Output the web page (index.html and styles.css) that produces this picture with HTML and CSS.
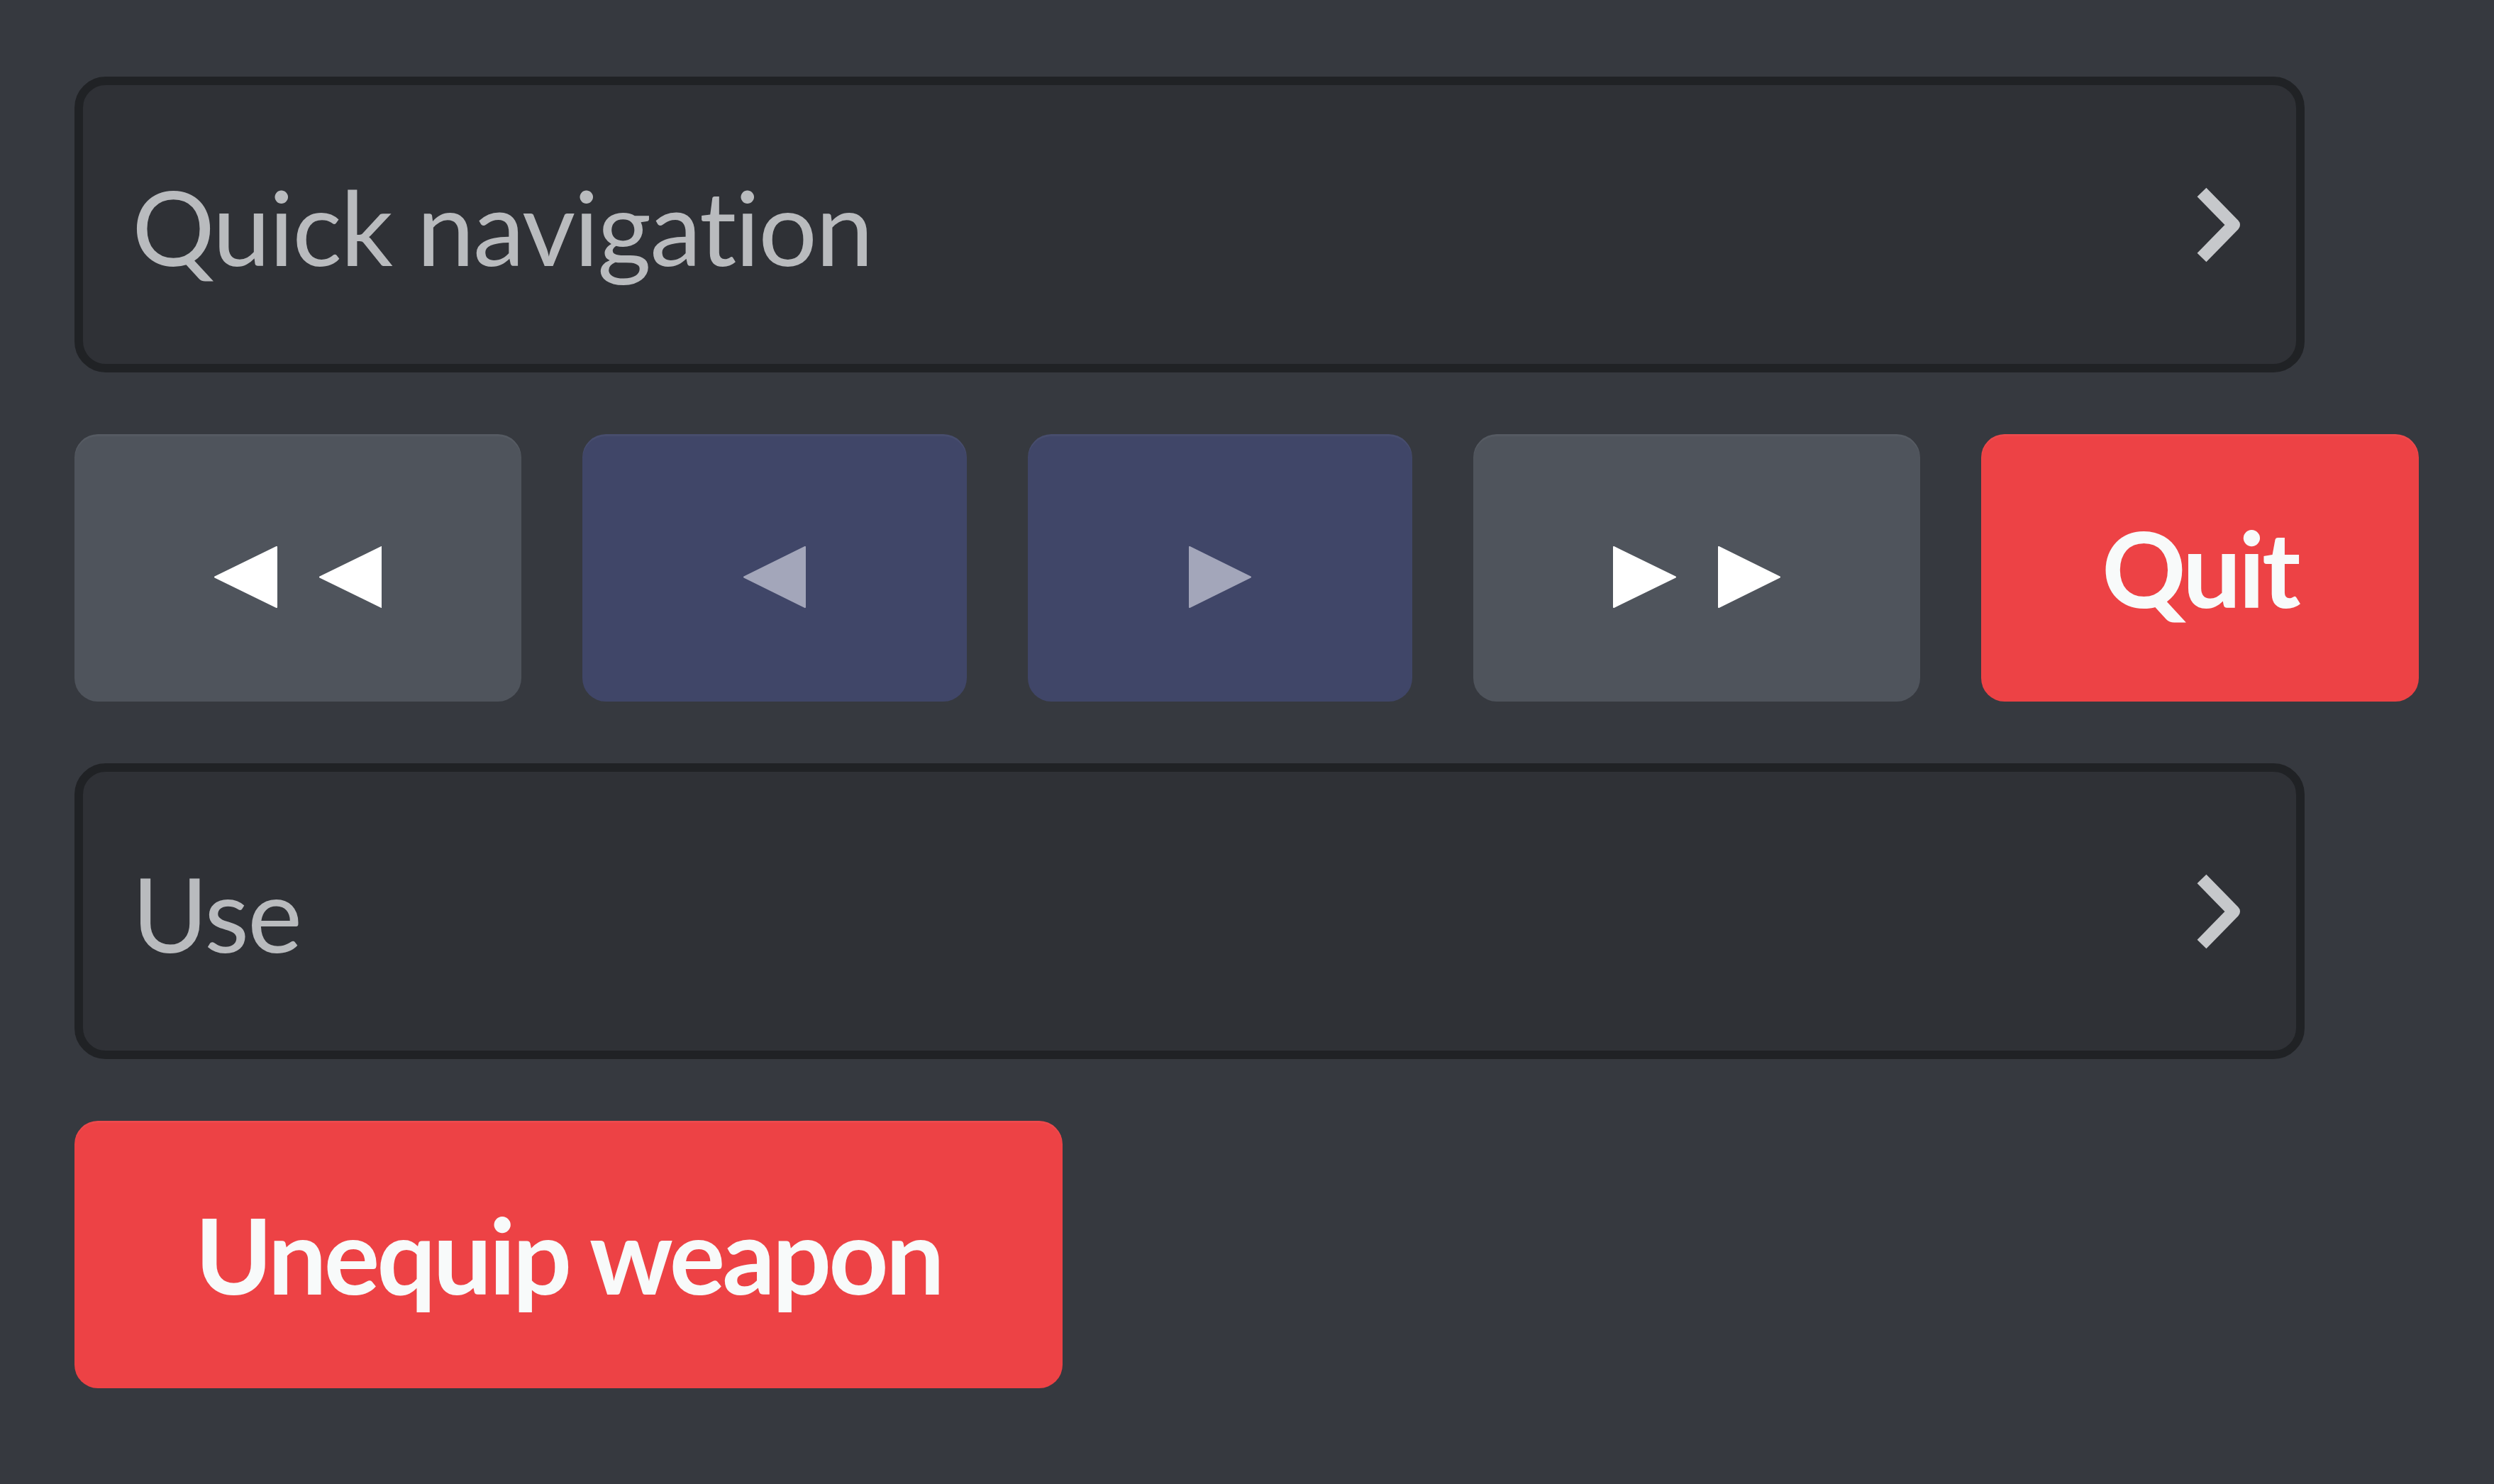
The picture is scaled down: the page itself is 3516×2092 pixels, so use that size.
FILE: index.html
```html
<!DOCTYPE html>
<html lang="en">
<head>
<meta charset="utf-8">
<title>Components</title>
<link rel="stylesheet" href="styles.css">
</head>
<body>
<div class="panel">
  <div class="select">
    <span class="select-label">Quick navigation</span>
    <svg class="chevron" viewBox="0 0 64 110" width="64" height="110"><path d="M9 9 L54 55 L9 101" fill="none" stroke="currentColor" stroke-width="18" stroke-linejoin="round"/></svg>
  </div>
  <div class="row">
    <button class="btn btn-secondary btn-double">
      <svg class="tri" viewBox="0 0 236 87" width="236" height="87"><polygon points="88,1 88,86 1,43.5" fill="currentColor" stroke="currentColor" stroke-width="2" stroke-linejoin="round"/><polygon points="236,1 236,86 149,43.5" fill="currentColor" stroke="currentColor" stroke-width="2" stroke-linejoin="round"/></svg>
    </button>
    <button class="btn btn-muted btn-single">
      <svg class="tri" viewBox="0 0 88 87" width="88" height="87"><polygon points="87,1 87,86 1,43.5" fill="currentColor" stroke="currentColor" stroke-width="2" stroke-linejoin="round"/></svg>
    </button>
    <button class="btn btn-muted btn-single">
      <svg class="tri" viewBox="0 0 88 87" width="88" height="87"><polygon points="1,1 1,86 87,43.5" fill="currentColor" stroke="currentColor" stroke-width="2" stroke-linejoin="round"/></svg>
    </button>
    <button class="btn btn-secondary btn-double">
      <svg class="tri" viewBox="0 0 236 87" width="236" height="87"><polygon points="1,1 1,86 88,43.5" fill="currentColor" stroke="currentColor" stroke-width="2" stroke-linejoin="round"/><polygon points="149,1 149,86 235,43.5" fill="currentColor" stroke="currentColor" stroke-width="2" stroke-linejoin="round"/></svg>
    </button>
    <button class="btn btn-danger">Quit</button>
  </div>
  <div class="select">
    <span class="select-label">Use</span>
    <svg class="chevron" viewBox="0 0 64 110" width="64" height="110"><path d="M9 9 L54 55 L9 101" fill="none" stroke="currentColor" stroke-width="18" stroke-linejoin="round"/></svg>
  </div>
  <div class="row">
    <button class="btn btn-danger">Unequip weapon</button>
  </div>
</div>
</body>
</html>
```
FILE: styles.css
```css
html, body {
  margin: 0;
  padding: 0;
  background: #36393f;
}

body {
  width: 3516px;
  height: 2092px;
  overflow: hidden;
  font-family: Lato, "Open Sans", sans-serif;
  font-variant-ligatures: none;
}

.panel {
  display: flex;
  flex-direction: column;
  align-items: flex-start;
  gap: 87px;
  padding: 108px 0 0 105px;
}

.select {
  box-sizing: border-box;
  width: 3144px;
  height: 417px;
  background: #2f3136;
  border: 12px solid #202225;
  border-radius: 44px;
  display: flex;
  align-items: center;
  justify-content: space-between;
  padding: 0 78px 0 69px;
  color: #b9bbbe;
}

.select-label {
  font-size: 146px;
  font-weight: 400;
  line-height: 1;
  letter-spacing: -2px;
  padding-top: 4px;
  font-variant-ligatures: none;
}

.chevron {
  color: #c6c8cb;
  display: block;
}

.row {
  display: flex;
  gap: 86px;
}

.btn {
  box-sizing: border-box;
  height: 377px;
  border: none;
  border-radius: 33px;
  display: flex;
  align-items: center;
  justify-content: center;
  padding: 0 170px;
  font-family: Lato, "Open Sans", sans-serif;
  font-size: 147px;
  font-weight: 700;
  letter-spacing: -4px;
  color: #ffffff;
  line-height: 1;
  box-shadow: inset 0 3px 0 rgba(255, 255, 255, 0.04);
}

.btn-secondary {
  background: #4f545c;
  color: #ffffff;
}

.btn-muted {
  background: #404668;
  color: #a3a6ba;
}

.btn-danger {
  background: #ed4245;
  color: #f8fafa;
}

.btn-double {
  width: 630px;
  padding: 0;
}

.btn-single {
  width: 542px;
  padding: 0;
}

.tri {
  display: block;
  margin-top: 26px;
}
```
